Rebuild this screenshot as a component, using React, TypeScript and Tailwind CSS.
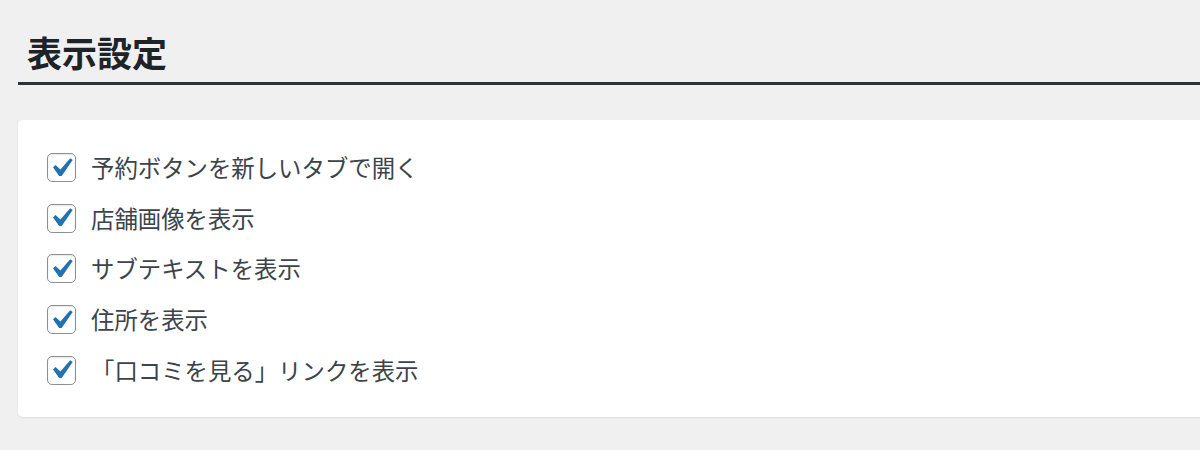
import React from "react";

const items = [
  "予約ボタンを新しいタブで開く",
  "店舗画像を表示",
  "サブテキストを表示",
  "住所を表示",
  "「口コミを見る」リンクを表示",
];

function Box() {
  return (
    <span className="relative inline-block w-[29px] h-[29px] shrink-0 rounded-[5px] border-[1.5px] border-[#8c8f94] bg-white shadow-[inset_0_1px_2px_rgba(0,0,0,0.1)]">
      <svg
        viewBox="0 0 20 20"
        className="absolute left-[-6.5px] top-[-5.5px] w-[38px] h-[38px]"
      >
        <path
          d="M14.83 4.89l1.34.94-5.81 8.38H9.02L5.78 9.67l1.34-1.25 2.57 2.4z"
          fill="#2271b1"
        />
      </svg>
    </span>
  );
}

export default function App() {
  return (
    <div
      className="w-[1200px] h-[450px] overflow-hidden bg-[#f0f0f1] pl-[18px]"
      style={{ fontFamily: '"Noto Sans CJK JP", "Noto Sans", sans-serif' }}
    >
      <div className="pt-[28px]">
        <h2 className="pl-[9px] text-[35px] leading-[48px] font-bold text-[#1d2327]">
          表示設定
        </h2>
        <div className="mt-[6px] h-[3px] bg-[#2c3338] w-[1300px]" />
      </div>
      <div className="mt-[35px] w-[1300px] h-[297px] rounded-[5px] bg-white shadow-[0_1px_2px_rgba(0,0,0,0.08)] pt-[33px] pl-[29px]">
        <div className="flex flex-col gap-[21.7px]">
          {items.map((t) => (
            <label key={t} className="flex items-center gap-[15px] h-[29px]">
              <Box />
              <span className="text-[23.4px] leading-[29px] text-[#3c434a]">
                {t}
              </span>
            </label>
          ))}
        </div>
      </div>
    </div>
  );
}
